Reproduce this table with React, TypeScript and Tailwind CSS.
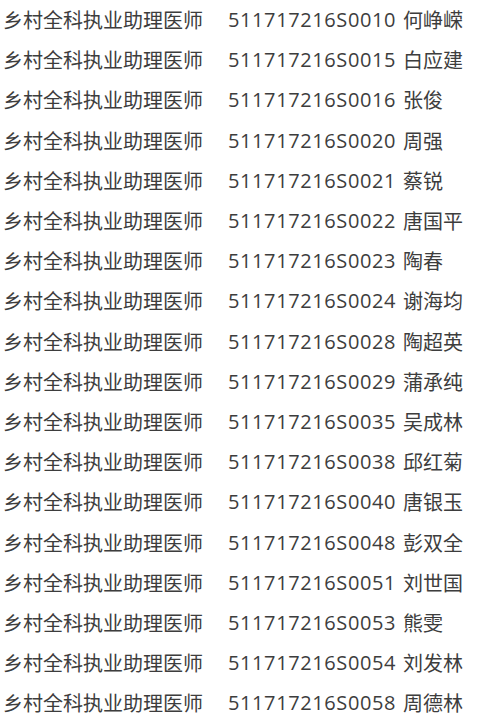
const rows: [string, string][] = [
  ["511717216S0010", "何峥嵘"],
  ["511717216S0015", "白应建"],
  ["511717216S0016", "张俊"],
  ["511717216S0020", "周强"],
  ["511717216S0021", "蔡锐"],
  ["511717216S0022", "唐国平"],
  ["511717216S0023", "陶春"],
  ["511717216S0024", "谢海均"],
  ["511717216S0028", "陶超英"],
  ["511717216S0029", "蒲承纯"],
  ["511717216S0035", "吴成林"],
  ["511717216S0038", "邱红菊"],
  ["511717216S0040", "唐银玉"],
  ["511717216S0048", "彭双全"],
  ["511717216S0051", "刘世国"],
  ["511717216S0053", "熊雯"],
  ["511717216S0054", "刘发林"],
  ["511717216S0058", "周德林"],
];

export default function App() {
  return (
    <div
      className="w-[500px] h-[723px] bg-white overflow-hidden text-[#3d3d3d] text-[20px] leading-[40.2px]"
      style={{ fontFamily: '"Noto Sans CJK SC", "Noto Sans", sans-serif' }}
    >
      {rows.map(([code, name]) => (
        <div key={code} className="flex whitespace-nowrap pl-[3px]">
          <span className="w-[225px]">乡村全科执业助理医师</span>
          <span className="font-['Open_Sans'] tracking-[0.6px]">{code}</span>
          <span className="ml-[7px]">{name}</span>
        </div>
      ))}
    </div>
  );
}
